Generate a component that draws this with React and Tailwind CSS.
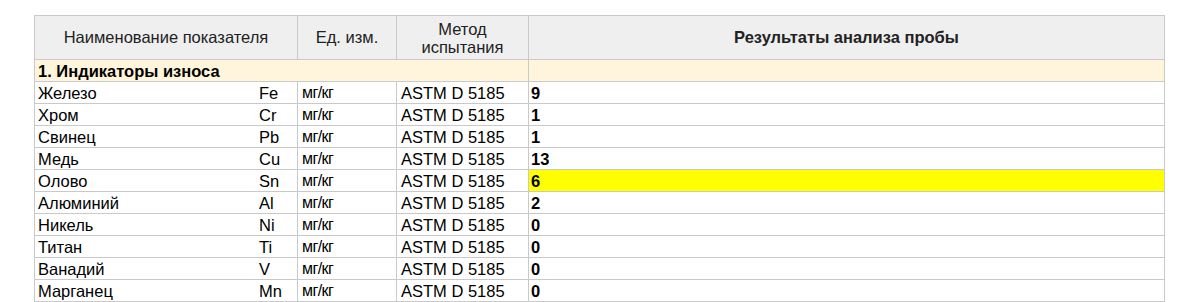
const rows = [
  { name: 'Железо', sym: 'Fe', value: '9' },
  { name: 'Хром', sym: 'Cr', value: '1' },
  { name: 'Свинец', sym: 'Pb', value: '1' },
  { name: 'Медь', sym: 'Cu', value: '13' },
  { name: 'Олово', sym: 'Sn', value: '6', warn: true },
  { name: 'Алюминий', sym: 'Al', value: '2' },
  { name: 'Никель', sym: 'Ni', value: '0' },
  { name: 'Титан', sym: 'Ti', value: '0' },
  { name: 'Ванадий', sym: 'V', value: '0' },
  { name: 'Марганец', sym: 'Mn', value: '0' },
]

export default function App() {
  return (
    <div className="w-[1200px] h-[302px] overflow-hidden bg-white pt-[15px] pl-[34px] font-['Liberation_Sans',Arial,sans-serif] text-[16.5px] text-black">
      <table className="w-[1131px] table-fixed border-collapse">
        <colgroup>
          <col className="w-[263px]" />
          <col className="w-[99px]" />
          <col className="w-[132px]" />
          <col />
        </colgroup>
        <thead>
          <tr className="h-[44px] bg-[#efefef] text-[#222]">
            <th className="border border-[#c9c9c9] font-normal text-center">Наименование показателя</th>
            <th className="border border-[#c9c9c9] font-normal text-center">Ед. изм.</th>
            <th className="border border-[#c9c9c9] font-normal text-center leading-[18px]">
              Метод<br />испытания
            </th>
            <th className="border border-[#c9c9c9] font-bold text-center">Результаты анализа пробы</th>
          </tr>
        </thead>
        <tbody>
          <tr className="h-[22px] bg-[#fff5dc]">
            <td colSpan={3} className="border border-[#c9c9c9] px-[3px] font-bold leading-[18px]">
              1. Индикаторы износа
            </td>
            <td className="border border-[#c9c9c9]"></td>
          </tr>
          {rows.map(r => (
            <tr key={r.sym} className="h-[22px]">
              <td className="border border-[#c9c9c9] pl-[3px] leading-[18px]">
                <div className="flex">
                  <span className="w-[221px]">{r.name}</span>
                  <span>{r.sym}</span>
                </div>
              </td>
              <td className="border border-[#c9c9c9] pl-[4px] leading-[18px] text-[16px] tracking-[-0.6px]">мг/кг</td>
              <td className="border border-[#c9c9c9] pl-[4px] leading-[18px]">ASTM D 5185</td>
              <td className={`border border-[#c9c9c9] pl-[2px] font-bold leading-[18px] ${r.warn ? 'bg-[#ffff00]' : ''}`}>
                {r.value}
              </td>
            </tr>
          ))}
        </tbody>
      </table>
    </div>
  )
}
